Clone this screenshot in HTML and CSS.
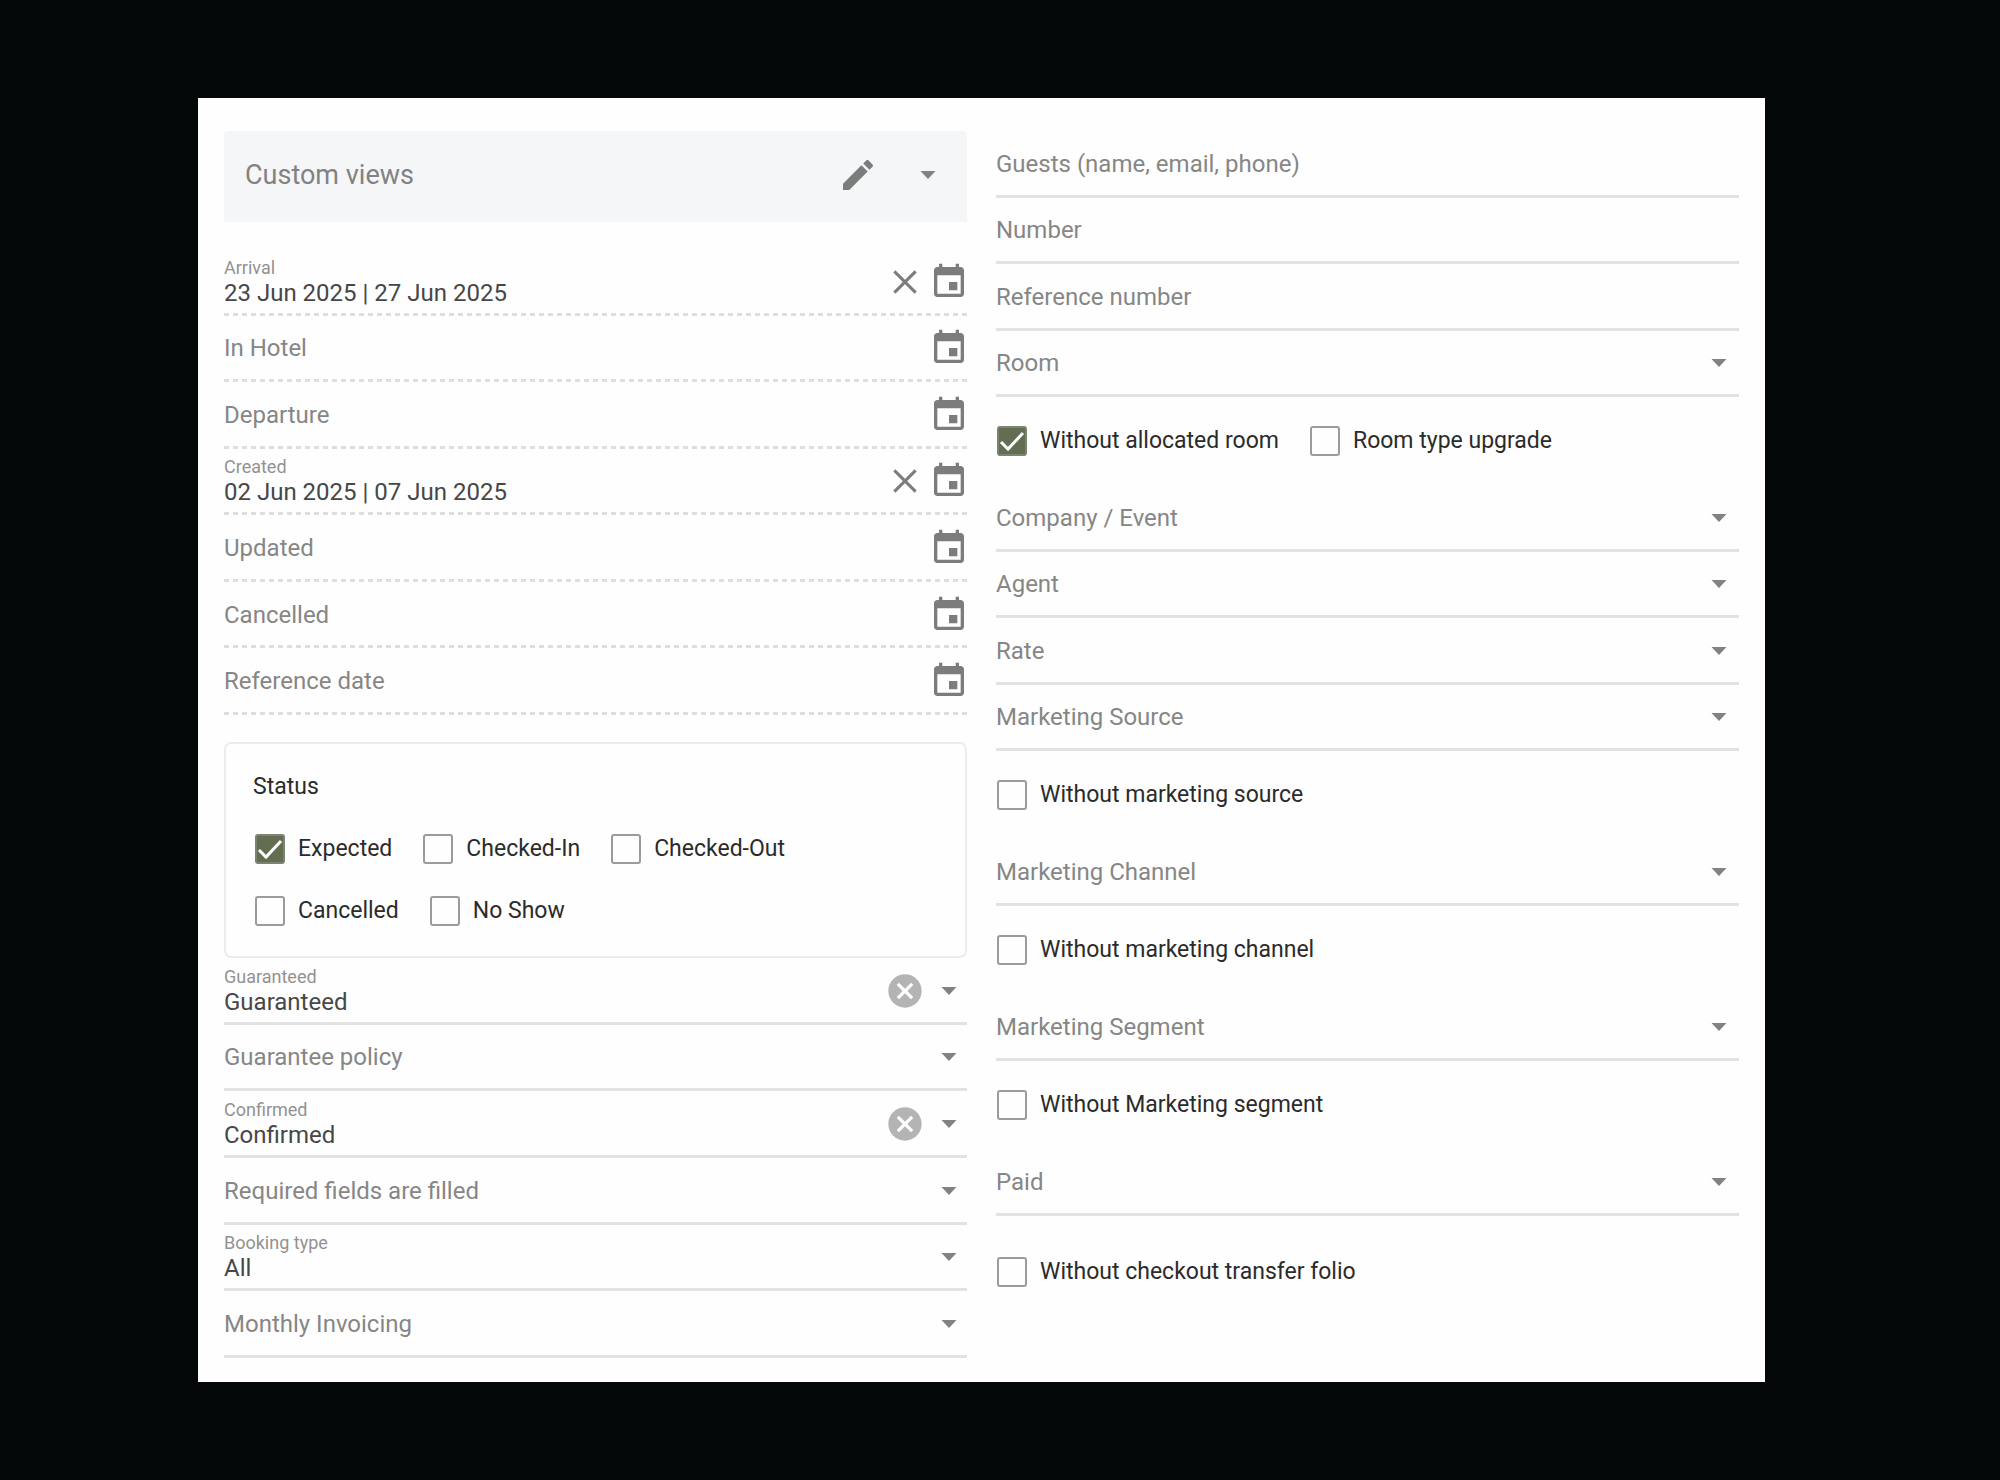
FILE: index.html
```html
<!DOCTYPE html>
<html lang="en">
<head>
    <meta charset="UTF-8">
    <meta name="viewport" content="width=device-width, initial-scale=1.0">
    <title>Reservation filters</title>
    <link rel="stylesheet" href="styles.css">
</head>
<body>
    <!-- Icon sprite -->
    <svg class="sprite" aria-hidden="true">
        <symbol id="calendar" viewBox="0 0 24 24"><path d="M17 12h-5v5h5v-5zM16 1v2H8V1H6v2H5c-1.11 0-1.99.9-1.99 2L3 19c0 1.1.89 2 2 2h14c1.1 0 2-.9 2-2V5c0-1.1-.9-2-2-2h-1V1h-2zm3 18H5V8h14v11z"/></symbol>
        <symbol id="close" viewBox="0 0 24 24"><path d="M5.6 5.6l12.8 12.8M18.4 5.6L5.6 18.4" fill="none" stroke="currentColor" stroke-width="1.8"/></symbol>
        <symbol id="clear" viewBox="0 0 24 24"><path d="M12 2C6.47 2 2 6.47 2 12s4.47 10 10 10 10-4.47 10-10S17.53 2 12 2zm5 13.59L15.59 17 12 13.41 8.41 17 7 15.59 10.59 12 7 8.41 8.41 7 12 10.59 15.59 7 17 8.41 13.41 12 17 15.59z"/></symbol>
        <symbol id="caret" viewBox="0 0 24 24"><path d="M7 9.3l5 5.4 5-5.4z"/></symbol>
        <symbol id="pencil" viewBox="0 0 24 24"><path d="M3 17.25V21h3.75L17.81 9.94l-3.75-3.75L3 17.25zM20.71 7.04c.39-.39.39-1.02 0-1.41l-2.34-2.34c-.39-.39-1.02-.39-1.41 0l-1.83 1.83 3.75 3.75 1.83-1.83z"/></symbol>
    </svg>

    <form class="panel">
        <div class="column">
            <div class="views">
                <span class="views-title">Custom views</span>
                <button type="button" class="icon-button" aria-label="Edit view"><svg class="icon"><use href="#pencil"/></svg></button>
                <button type="button" class="icon-button" aria-label="Choose view"><svg class="caret"><use href="#caret"/></svg></button>
            </div>

            <div class="group dates">
                <div class="field">
                    <div class="field-body">
                        <label for="arrival">Arrival</label>
                        <input type="text" id="arrival" value="23 Jun 2025 | 27 Jun 2025">
                    </div>
                    <button type="button" class="icon-button" aria-label="Clear arrival"><svg class="icon"><use href="#close"/></svg></button>
                    <button type="button" class="icon-button" aria-label="Pick arrival"><svg class="icon"><use href="#calendar"/></svg></button>
                </div>
                <div class="field">
                    <input type="text" placeholder="In Hotel" aria-label="In Hotel">
                    <button type="button" class="icon-button" aria-label="Pick in hotel"><svg class="icon"><use href="#calendar"/></svg></button>
                </div>
                <div class="field">
                    <input type="text" placeholder="Departure" aria-label="Departure">
                    <button type="button" class="icon-button" aria-label="Pick departure"><svg class="icon"><use href="#calendar"/></svg></button>
                </div>
                <div class="field">
                    <div class="field-body">
                        <label for="created">Created</label>
                        <input type="text" id="created" value="02 Jun 2025 | 07 Jun 2025">
                    </div>
                    <button type="button" class="icon-button" aria-label="Clear created"><svg class="icon"><use href="#close"/></svg></button>
                    <button type="button" class="icon-button" aria-label="Pick created"><svg class="icon"><use href="#calendar"/></svg></button>
                </div>
                <div class="field">
                    <input type="text" placeholder="Updated" aria-label="Updated">
                    <button type="button" class="icon-button" aria-label="Pick updated"><svg class="icon"><use href="#calendar"/></svg></button>
                </div>
                <div class="field">
                    <input type="text" placeholder="Cancelled" aria-label="Cancelled">
                    <button type="button" class="icon-button" aria-label="Pick cancelled"><svg class="icon"><use href="#calendar"/></svg></button>
                </div>
                <div class="field">
                    <input type="text" placeholder="Reference date" aria-label="Reference date">
                    <button type="button" class="icon-button" aria-label="Pick reference date"><svg class="icon"><use href="#calendar"/></svg></button>
                </div>
            </div>

            <div class="status" role="group" aria-labelledby="status-title">
                <div class="status-title" id="status-title">Status</div>
                <div class="status-options">
                    <label class="check"><input type="checkbox" checked>Expected</label>
                    <label class="check"><input type="checkbox">Checked-In</label>
                    <label class="check"><input type="checkbox">Checked-Out</label>
                    <label class="check"><input type="checkbox">Cancelled</label>
                    <label class="check"><input type="checkbox">No Show</label>
                </div>
            </div>

            <div class="group details">
                <div class="field">
                    <div class="field-body">
                        <label for="guaranteed">Guaranteed</label>
                        <select id="guaranteed" class="filled"><option>Guaranteed</option></select>
                    </div>
                    <button type="button" class="icon-button clear" aria-label="Clear guaranteed"><svg class="icon"><use href="#clear"/></svg></button>
                    <svg class="caret"><use href="#caret"/></svg>
                </div>
                <div class="field">
                    <select aria-label="Guarantee policy"><option>Guarantee policy</option></select>
                    <svg class="caret"><use href="#caret"/></svg>
                </div>
                <div class="field">
                    <div class="field-body">
                        <label for="confirmed">Confirmed</label>
                        <select id="confirmed" class="filled"><option>Confirmed</option></select>
                    </div>
                    <button type="button" class="icon-button clear" aria-label="Clear confirmed"><svg class="icon"><use href="#clear"/></svg></button>
                    <svg class="caret"><use href="#caret"/></svg>
                </div>
                <div class="field">
                    <select aria-label="Required fields are filled"><option>Required fields are filled</option></select>
                    <svg class="caret"><use href="#caret"/></svg>
                </div>
                <div class="field">
                    <div class="field-body">
                        <label for="booking-type">Booking type</label>
                        <select id="booking-type" class="filled"><option>All</option></select>
                    </div>
                    <svg class="caret"><use href="#caret"/></svg>
                </div>
                <div class="field">
                    <select aria-label="Monthly Invoicing"><option>Monthly Invoicing</option></select>
                    <svg class="caret"><use href="#caret"/></svg>
                </div>
            </div>
        </div>

        <div class="column search">
            <div class="group four">
                <div class="field"><input type="text" placeholder="Guests (name, email, phone)" aria-label="Guests (name, email, phone)"></div>
                <div class="field"><input type="text" placeholder="Number" aria-label="Number"></div>
                <div class="field"><input type="text" placeholder="Reference number" aria-label="Reference number"></div>
                <div class="field">
                    <select aria-label="Room"><option>Room</option></select>
                    <svg class="caret"><use href="#caret"/></svg>
                </div>
            </div>
            <div class="check-row">
                <label class="check"><input type="checkbox" checked>Without allocated room</label>
                <label class="check"><input type="checkbox">Room type upgrade</label>
            </div>

            <div class="group four">
                <div class="field">
                    <select aria-label="Company / Event"><option>Company / Event</option></select>
                    <svg class="caret"><use href="#caret"/></svg>
                </div>
                <div class="field">
                    <select aria-label="Agent"><option>Agent</option></select>
                    <svg class="caret"><use href="#caret"/></svg>
                </div>
                <div class="field">
                    <select aria-label="Rate"><option>Rate</option></select>
                    <svg class="caret"><use href="#caret"/></svg>
                </div>
                <div class="field">
                    <select aria-label="Marketing Source"><option>Marketing Source</option></select>
                    <svg class="caret"><use href="#caret"/></svg>
                </div>
            </div>
            <div class="check-row">
                <label class="check"><input type="checkbox">Without marketing source</label>
            </div>

            <div class="field">
                <select aria-label="Marketing Channel"><option>Marketing Channel</option></select>
                <svg class="caret"><use href="#caret"/></svg>
            </div>
            <div class="check-row">
                <label class="check"><input type="checkbox">Without marketing channel</label>
            </div>

            <div class="field">
                <select aria-label="Marketing Segment"><option>Marketing Segment</option></select>
                <svg class="caret"><use href="#caret"/></svg>
            </div>
            <div class="check-row">
                <label class="check"><input type="checkbox">Without Marketing segment</label>
            </div>

            <div class="field">
                <select aria-label="Paid"><option>Paid</option></select>
                <svg class="caret"><use href="#caret"/></svg>
            </div>
            <div class="check-row spaced">
                <label class="check"><input type="checkbox">Without checkout transfer folio</label>
            </div>
        </div>
    </form>
</body>
</html>
```

FILE: styles.css
```css
* {
    margin: 0;
    padding: 0;
    box-sizing: border-box;
}

body {
    min-height: 100vh;
    padding: 98px 235px 98px 198px;
    background: #030708;
    font-family: Roboto, Arial, sans-serif;
    font-size: 23px;
    line-height: 26px;
    color: #2b2b2b;
}

.sprite {
    display: none;
}

.panel {
    display: grid;
    grid-template-columns: 1fr 1fr;
    gap: 29px;
    padding: 33px 26px 24px;
    background: #fefefe;
}

/* Custom views bar */
.views {
    display: flex;
    align-items: center;
    gap: 34px;
    height: 91px;
    margin-bottom: 27px;
    padding: 0 21px 3px;
    background: #f5f6f8;
    border-radius: 4px 4px 0 0;
    color: #828282;
}

.views-title {
    flex: 1;
    font-size: 27px;
    line-height: 32px;
}

.icon-button {
    display: flex;
    align-items: center;
    justify-content: center;
    flex: none;
    width: 36px;
    height: 36px;
    background: none;
    border: none;
    color: #7b7d7c;
    cursor: pointer;
}

.icon-button.clear {
    color: #b4b4b4;
}

.icon {
    flex: none;
    width: 40px;
    height: 40px;
    fill: currentColor;
}

.caret {
    flex: none;
    width: 36px;
    height: 36px;
    fill: #828282;
    pointer-events: none;
}

/* Fields */
.group {
    display: grid;
    grid-auto-rows: 1fr;
}

.dates {
    min-height: 466px;
}

.details {
    min-height: 400px;
}

.four {
    min-height: 266px;
}

.field {
    display: flex;
    align-items: center;
    gap: 8px;
    min-height: 66px;
    padding-top: 2px;
    border-bottom: 3px solid #e2e2e2;
    font-size: 24px;
    line-height: 28px;
}

.search .field {
    padding-right: 2px;
}

.search > .field {
    min-height: 67px;
}

.dates .field {
    padding-bottom: 3px;
    border-bottom: none;
    background: repeating-linear-gradient(to right, #dedede 0 5px, transparent 5px 9px) bottom / 100% 3px no-repeat;
}

.field-body {
    flex: 1;
}

.field-body label {
    display: block;
    font-size: 18px;
    line-height: 22px;
    color: #929292;
}

.field input,
.field select {
    display: block;
    flex: 1;
    width: 100%;
    min-width: 0;
    appearance: none;
    background: none;
    border: none;
    outline: none;
    font: inherit;
    color: #474747;
}

.field select {
    color: #868686;
}

.field select.filled {
    color: #474747;
}

.field input::placeholder {
    color: #868686;
    opacity: 1;
}

/* Checkboxes */
.check {
    display: flex;
    align-items: center;
    gap: 13px;
}

.check input {
    flex: none;
    width: 30px;
    height: 30px;
    appearance: none;
    background: #fefefe;
    border: 2px solid #9b9b9b;
    border-radius: 3px;
}

.check input:checked {
    background: #626d52 url("data:image/svg+xml,%3Csvg xmlns='http://www.w3.org/2000/svg' viewBox='0 0 26 26'%3E%3Cpath d='M2 14l7 7L24 5' fill='none' stroke='%23fff' stroke-width='3'/%3E%3C/svg%3E") center / 100% no-repeat;
    border-color: #7c8372;
}

.check-row {
    display: flex;
    align-items: center;
    gap: 31px;
    height: 88px;
    padding-left: 1px;
}

.check-row.spaced {
    margin-top: 12px;
}

/* Status box */
.status {
    min-height: 215px;
    margin-top: 27px;
    padding: 30px 27px;
    border: 2px solid #ececec;
    border-radius: 7px;
}

.status-title {
    margin-bottom: 34px;
}

.status-options {
    display: flex;
    flex-wrap: wrap;
    gap: 32px 31px;
    padding-left: 2px;
}
```
